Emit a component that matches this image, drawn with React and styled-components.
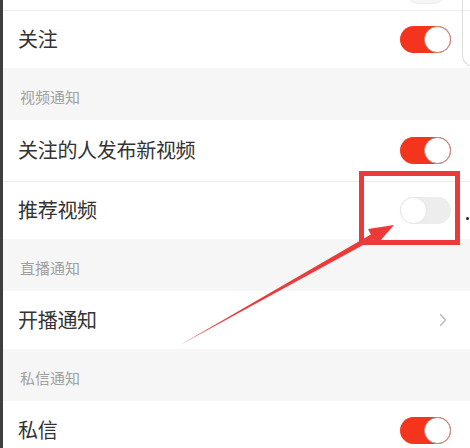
import React from "react";
import styled, { createGlobalStyle } from "styled-components";

const GlobalStyle = createGlobalStyle`
  html, body { margin: 0; padding: 0; background: #fff; }
  body { font-family: "Noto Sans CJK SC", "Noto Sans", sans-serif; }
`;

const Screen = styled.div`
  position: relative;
  width: 470px;
  height: 448px;
  overflow: hidden;
  box-sizing: border-box;
  border-left: 3px solid #3e3e3e;
  background: #fff;
`;

const List = styled.div`
  display: flex;
  flex-direction: column;
`;

const TopRow = styled.div`
  height: 10px;
  overflow: hidden;
  display: flex;
  justify-content: flex-end;
  align-items: flex-start;
  padding-right: 23px;
  border-bottom: 1px solid #efefef;
`;

const Ghost = styled.div`
  width: 40px;
  height: 27px;
  margin-top: -25px;
  border-radius: 14px;
  background: #f6f6f6;
  border: 1px solid #ececec;
`;

const Row = styled.div`
  height: ${(p) => p.$h}px;
  display: flex;
  align-items: center;
  justify-content: space-between;
  padding: 0 19px 0 15px;
  background: #fff;
  border-bottom: ${(p) => (p.$line ? "1px solid #eeeeee" : "none")};
`;

const Label = styled.span`
  font-size: 20px;
  color: #333;
  letter-spacing: -0.3px;
  margin-top: -2px;
`;

const Header = styled.div`
  height: 52px;
  display: flex;
  align-items: center;
  padding: 4px 0 0 17px;
  box-sizing: border-box;
  background: #f6f6f6;
  font-size: 15px;
  color: #a0a0a0;
`;

const Track = styled.div`
  position: relative;
  width: 51px;
  height: 27px;
  border-radius: 14px;
  background: ${(p) => (p.$on ? "#f4351d" : "#ededed")};
  flex-shrink: 0;
`;

const Knob = styled.div`
  position: absolute;
  top: 0;
  ${(p) => (p.$on ? "right: 0;" : "left: 0;")}
  width: 27px;
  height: 27px;
  box-sizing: border-box;
  border-radius: 50%;
  background: #fff;
  border: 1px solid ${(p) => (p.$on ? "#b98c86" : "#eaeaea")};
  box-shadow: ${(p) => (p.$on ? "none" : "0 0 1px rgba(0,0,0,0.05)")};
`;

const Chevron = styled.svg`
  width: 8px;
  height: 14px;
  margin-right: 4px;
`;

const SidePanel = styled.div`
  position: absolute;
  left: 459px;
  top: -20px;
  width: 40px;
  height: 86px;
  border-left: 1px solid #dcdcdc;
  border-bottom: 1px solid #dcdcdc;
  border-bottom-left-radius: 12px;
`;

const Box = styled.div`
  position: absolute;
  left: 356px;
  top: 171px;
  width: 101px;
  height: 74px;
  box-sizing: border-box;
  border: 5px solid #ec3a3a;
`;

const Dot = styled.div`
  position: absolute;
  left: 463px;
  top: 217px;
  width: 3px;
  height: 3px;
  border-radius: 50%;
  background: #222;
`;

const ArrowSvg = styled.svg`
  position: absolute;
  left: -3px;
  top: 0;
  width: 470px;
  height: 448px;
  pointer-events: none;
`;

function Toggle({ on }) {
  return (
    <Track $on={on}>
      <Knob $on={on} />
    </Track>
  );
}

export default function App() {
  return (
    <>
      <GlobalStyle />
      <Screen>
        <List>
          <TopRow>
            <Ghost />
          </TopRow>
          <Row $h={57}>
            <Label>关注</Label>
            <Toggle on />
          </Row>
          <Header>视频通知</Header>
          <Row $h={61} $line>
            <Label>关注的人发布新视频</Label>
            <Toggle on />
          </Row>
          <Row $h={57}>
            <Label>推荐视频</Label>
            <Toggle on={false} />
          </Row>
          <Header>直播通知</Header>
          <Row $h={58}>
            <Label>开播通知</Label>
            <Chevron viewBox="0 0 8 14">
              <path d="M1.5 1.5 L6.5 7 L1.5 12.5" fill="none" stroke="#bdbdbd" strokeWidth="1.5" strokeLinecap="round" strokeLinejoin="round" />
            </Chevron>
          </Row>
          <Header>私信通知</Header>
          <Row $h={58}>
            <Label>私信</Label>
            <Toggle on />
          </Row>
        </List>
        <SidePanel />
        <Box />
        <Dot />
        <ArrowSvg viewBox="0 0 470 448">
          <polygon
            points="180,345 370.8,234.5 368,229 394,225 376.5,245 373.2,239.5"
            fill="#ec3a3a"
          />
        </ArrowSvg>
      </Screen>
    </>
  );
}
